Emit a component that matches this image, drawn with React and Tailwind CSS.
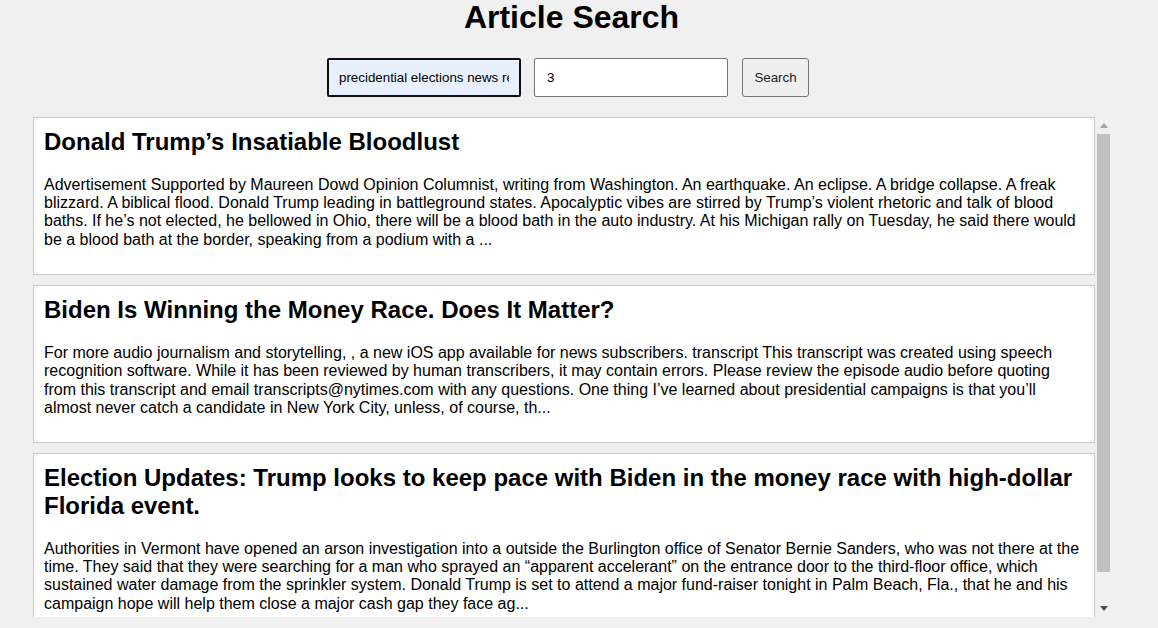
import React from 'react';

const articles = [
  {
    title: 'Donald Trump’s Insatiable Bloodlust',
    body: 'Advertisement Supported by Maureen Dowd Opinion Columnist, writing from Washington. An earthquake. An eclipse. A bridge collapse. A freak blizzard. A biblical flood. Donald Trump leading in battleground states. Apocalyptic vibes are stirred by Trump’s violent rhetoric and talk of blood baths. If he’s not elected, he bellowed in Ohio, there will be a blood bath in the auto industry. At his Michigan rally on Tuesday, he said there would be a blood bath at the border, speaking from a podium with a ...',
  },
  {
    title: 'Biden Is Winning the Money Race. Does It Matter?',
    body: 'For more audio journalism and storytelling, , a new iOS app available for news subscribers. transcript This transcript was created using speech recognition software. While it has been reviewed by human transcribers, it may contain errors. Please review the episode audio before quoting from this transcript and email transcripts@nytimes.com with any questions. One thing I’ve learned about presidential campaigns is that you’ll almost never catch a candidate in New York City, unless, of course, th...',
  },
  {
    title: 'Election Updates: Trump looks to keep pace with Biden in the money race with high-dollar Florida event.',
    body: 'Authorities in Vermont have opened an arson investigation into a outside the Burlington office of Senator Bernie Sanders, who was not there at the time. They said that they were searching for a man who sprayed an “apparent accelerant” on the entrance door to the third-floor office, which sustained water damage from the sprinkler system. Donald Trump is set to attend a major fund-raiser tonight in Palm Beach, Fla., that he and his campaign hope will help them close a major cash gap they face ag...',
  },
];

function ArticleCard({ title, body }) {
  return (
    <div className="mb-[10px] border border-[#cccccc] bg-white p-[10px]">
      <h2 className="mb-[20px] text-[24px] font-bold leading-[27.6px]">{title}</h2>
      <p className="mb-[15px] text-[16px] leading-[18.4px]">{body}</p>
    </div>
  );
}

export default function App() {
  return (
    <div className="min-h-screen bg-[#f0f0f0] font-['Liberation_Sans',Arial,sans-serif] text-black">
      <div className="w-[1143px]">
        <h1 className="pt-[1px] text-center text-[32px] font-bold leading-[32px]">Article Search</h1>

        {/* Search bar */}
        <div className="mt-[25px] flex justify-center pr-[7px]">
          <input
            type="text"
            defaultValue="precidential elections news reports"
            className="h-[39px] w-[194px] rounded-[2px] border-2 border-[#101010] bg-[#e8f0fe] px-[10px] text-[13.333px] outline-none"
          />
          <input
            type="text"
            defaultValue="3"
            className="ml-[13px] h-[39px] w-[194px] rounded-[2px] border border-[#767676] bg-white px-[12px] text-[13.333px] outline-none"
          />
          <button className="ml-[14px] h-[39px] w-[67px] rounded-[3px] border border-[#767676] bg-[#efefef] text-[13.333px] text-[#222]">
            Search
          </button>
        </div>

        {/* Results */}
        <div className="ml-[33px] mt-[20px] flex h-[500px] w-[1079px]">
          <div className="flex-1 overflow-hidden">
            {articles.map((a) => (
              <ArticleCard key={a.title} title={a.title} body={a.body} />
            ))}
          </div>
          <div className="flex w-[17px] flex-col bg-[#f1f1f1]">
            <div className="flex h-[17px] items-center justify-center">
              <svg width="8" height="5" viewBox="0 0 8 5">
                <polygon points="4,0 8,5 0,5" fill="#a3a3a3" />
              </svg>
            </div>
            <div className="mx-[2px] mb-[28px] flex-1 bg-[#c1c1c1]" />
            <div className="flex h-[17px] items-center justify-center">
              <svg width="8" height="5" viewBox="0 0 8 5">
                <polygon points="0,0 8,0 4,5" fill="#505050" />
              </svg>
            </div>
          </div>
        </div>
      </div>
    </div>
  );
}
